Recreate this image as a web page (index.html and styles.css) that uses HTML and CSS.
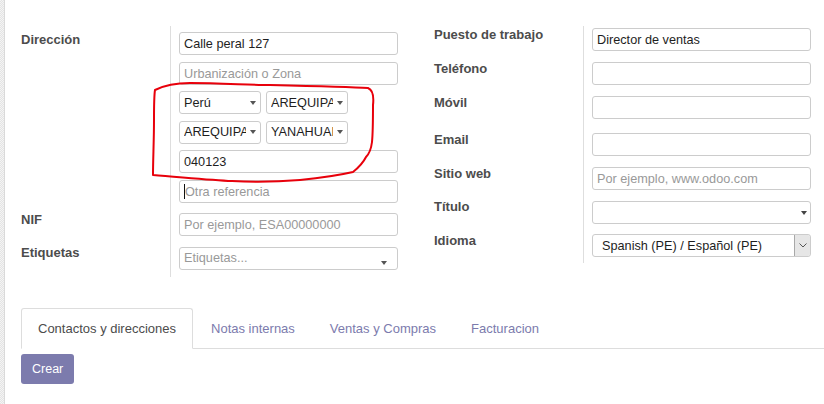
FILE: index.html
```html
<!DOCTYPE html>
<html lang="es">
<head>
<meta charset="utf-8">
<title>Contacto</title>
<link rel="stylesheet" href="styles.css">
</head>
<body>
<div class="app">
  <div class="stripe"></div>
  <main class="sheet">
    <div class="groups">
      <section class="group">
        <div class="row">
          <div class="lbl lt4">Dirección</div>
          <div class="fld pt6">
            <div class="stack">
              <div class="inp">Calle peral 127</div>
              <div class="inp ph">Urbanización o Zona</div>
              <div class="pair">
                <div class="sel"><span class="val">Perú</span><span class="caret"></span></div>
                <div class="sel"><span class="val">AREQUIPA</span><span class="caret"></span></div>
              </div>
              <div class="pair">
                <div class="sel"><span class="val">AREQUIPA</span><span class="caret"></span></div>
                <div class="sel"><span class="val">YANAHUARA</span><span class="caret"></span></div>
              </div>
              <div class="inp">040123</div>
              <div class="inp ph"><span class="cursor"></span>Otra referencia</div>
            </div>
          </div>
        </div>
        <div class="row">
          <div class="lbl lt8">NIF</div>
          <div class="fld pt10">
            <div class="inp ph">Por ejemplo, ESA00000000</div>
          </div>
        </div>
        <div class="row">
          <div class="lbl lt85">Etiquetas</div>
          <div class="fld pt11 pb7">
            <div class="sel tags"><span class="val ph">Etiquetas...</span><span class="caret"></span></div>
          </div>
        </div>
      </section>

      <section class="group">
        <div class="row">
          <div class="lbl lt0">Puesto de trabajo</div>
          <div class="fld pt2">
            <div class="inp">Director de ventas</div>
          </div>
        </div>
        <div class="row">
          <div class="lbl lt9">Teléfono</div>
          <div class="fld pt11"><div class="inp"></div></div>
        </div>
        <div class="row">
          <div class="lbl lt9">Móvil</div>
          <div class="fld pt11"><div class="inp"></div></div>
        </div>
        <div class="row">
          <div class="lbl lt115">Email</div>
          <div class="fld pt14"><div class="inp"></div></div>
        </div>
        <div class="row">
          <div class="lbl lt9">Sitio web</div>
          <div class="fld pt11"><div class="inp ph">Por ejemplo, www.odoo.com</div></div>
        </div>
        <div class="row">
          <div class="lbl lt75">Título</div>
          <div class="fld pt11">
            <div class="sel title"><span class="val"></span><span class="caret"></span></div>
          </div>
        </div>
        <div class="row">
          <div class="lbl lt75">Idioma</div>
          <div class="fld pt10 pb6">
            <div class="native">
              <span class="val">Spanish (PE) / Español (PE)</span>
              <span class="btn"><svg width="8" height="5" viewBox="0 0 8 5"><polyline points="0.5,0.5 4,4 7.5,0.5" fill="none" stroke="#555" stroke-width="1"/></svg></span>
            </div>
          </div>
        </div>
      </section>
    </div>

    <nav class="tabs">
      <div class="tab active">Contactos y direcciones</div>
      <div class="tab">Notas internas</div>
      <div class="tab">Ventas y Compras</div>
      <div class="tab">Facturacion</div>
    </nav>
    <div class="actions">
      <button class="btn-primary" type="button">Crear</button>
    </div>
  </main>
</div>
<svg class="scribble" width="824" height="404" viewBox="0 0 824 404">
  <path d="M155,90 C165,85 178,83 190,83 C220,83 250,85 270,85 C310,86 350,87 368,88 C373,90 374,96 373,105 C373,118 373,132 372,142 C371,150 369,154 366,157 C363,163 358,168 353,172 C340,175 320,178 300,180 C275,182 250,182 232,181 C210,180 180,177 153,175 C153,160 154,140 154,120 C154,105 154,96 155,90 Z" fill="none" stroke="#e8000b" stroke-width="2" stroke-linejoin="round"/>
</svg>
</body>
</html>
```

FILE: styles.css
```css
html, body {
  margin: 0;
  padding: 0;
  background: #fff;
}

body {
  position: relative;
  width: 824px;
  height: 404px;
  overflow: hidden;
  font-family: "Liberation Sans", Arial, sans-serif;
  font-size: 13px;
  color: #4c4c4c;
}

.app {
  display: flex;
  height: 404px;
}

.stripe {
  width: 4px;
  flex: 0 0 4px;
  background: repeating-conic-gradient(#e4e4e4 0 25%, #f4f4f4 0 50%) 0 0 / 2px 2px;
  border-right: 1px solid #dadada;
}

.sheet {
  flex: 1;
  padding-left: 16px;
}

.groups {
  display: flex;
  gap: 36px;
  padding-top: 26px;
}

.group {
  display: flex;
  flex-direction: column;
}

.row {
  display: flex;
}

.lbl {
  width: 149px;
  box-sizing: border-box;
  font-weight: bold;
  font-size: 13px;
  line-height: 18px;
  color: #4c4c4c;
}

.lt0 { padding-top: 0; }
.lt4 { padding-top: 4.5px; }
.lt75 { padding-top: 7.5px; }
.lt8 { padding-top: 8px; }
.lt85 { padding-top: 8.5px; }
.lt9 { padding-top: 9px; }
.lt115 { padding-top: 11.5px; }

.fld {
  width: 228px;
  box-sizing: border-box;
  border-left: 1px solid #dedede;
  padding-left: 8px;
}

.pt2 { padding-top: 2px; }
.pt6 { padding-top: 6px; }
.pt10 { padding-top: 10px; }
.pt11 { padding-top: 11px; }
.pt14 { padding-top: 14px; }
.pb6 { padding-bottom: 6px; }
.pb7 { padding-bottom: 7px; }

.stack {
  display: flex;
  flex-direction: column;
  gap: 6.6px;
}

.inp, .sel, .native {
  box-sizing: border-box;
  width: 219px;
  height: 23px;
  border: 1px solid #cccccc;
  border-radius: 3px;
  font-size: 12.7px;
  color: #1e1e1e;
  background: #fff;
}

.inp {
  padding: 2px 4px 0;
  line-height: 19px;
  white-space: nowrap;
  overflow: hidden;
}

.ph, .inp.ph {
  color: #999999;
}

.cursor {
  display: inline-block;
  width: 1px;
  height: 15px;
  background: #111;
  vertical-align: -3px;
  margin-right: 0;
}

.pair {
  display: flex;
  gap: 5px;
}

.sel {
  display: flex;
  align-items: center;
  padding: 0 4px;
}

.pair .sel {
  width: 82px;
}

.sel .val {
  flex: 1;
  min-width: 0;
  overflow: hidden;
  white-space: nowrap;
  line-height: 19px;
  padding-top: 1px;
}

.caret {
  flex: 0 0 auto;
  width: 0;
  height: 0;
  margin-left: 4px;
  border-left: 3.5px solid transparent;
  border-right: 3.5px solid transparent;
  border-top: 4px solid #555;
}

.sel.tags .caret {
  margin-right: 6px;
  margin-top: 9px;
}

.sel.title .caret {
  margin-right: -1px;
  border-top-color: #444;
}

.native {
  display: flex;
  align-items: stretch;
  overflow: hidden;
}

.native .val {
  flex: 1;
  padding: 2px 0 0 9px;
  line-height: 19px;
  white-space: nowrap;
  color: #1e1e1e;
}

.native .btn {
  width: 17px;
  box-sizing: border-box;
  background: #e6e6e6;
  border: 1px solid #a8a8a8;
  border-radius: 0 2px 2px 0;
  display: flex;
  align-items: center;
  justify-content: center;
  margin: -1px -1px -1px 0;
}

.tabs {
  display: flex;
  margin-top: 31px;
  border-bottom: 1px solid #dddddd;
  height: 40px;
}

.tab {
  box-sizing: border-box;
  height: 41px;
  padding: 11px 16px 10px;
  margin-right: 1px;
  line-height: 18px;
  font-size: 13px;
  color: #7c7bad;
  border: 1px solid transparent;
  border-radius: 3px 3px 0 0;
  white-space: nowrap;
}

.tab.active {
  color: #4c4c4c;
  background: #fff;
  border-color: #dddddd;
  border-bottom-color: #fff;
}

.actions {
  padding-top: 5px;
}

.btn-primary {
  display: block;
  height: 30px;
  padding: 0 11px;
  border: 0;
  border-radius: 3px;
  background: #7c7bad;
  color: #fff;
  font-family: "Liberation Sans", Arial, sans-serif;
  font-size: 12.5px;
  line-height: 30px;
}

.scribble {
  position: absolute;
  left: 0;
  top: 0;
  pointer-events: none;
}
```
